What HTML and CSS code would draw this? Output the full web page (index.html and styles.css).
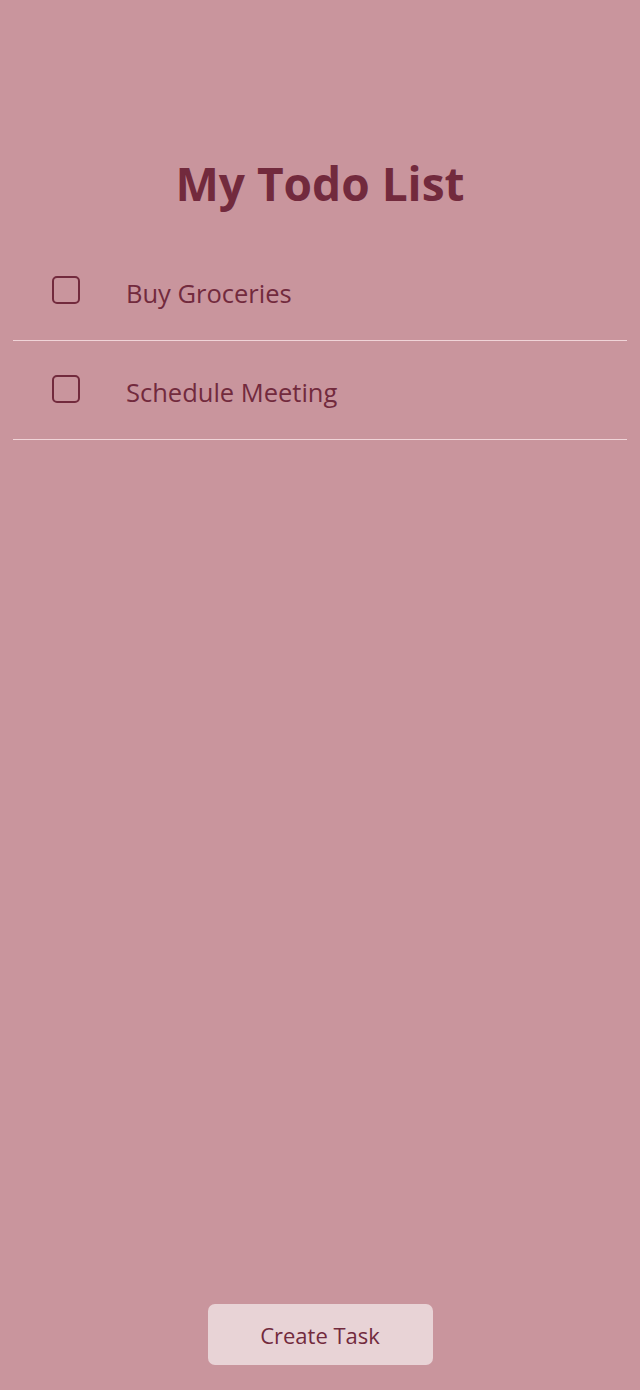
FILE: index.html
```html
<!DOCTYPE html>
<html>
<head>
<meta charset="utf-8">
<link rel="stylesheet" href="styles.css">
</head>
<body>
<div class="app">
  <h1 class="title">My Todo List</h1>
  <ul class="list">
    <li class="item"><span class="check"></span><span class="label">Buy Groceries</span></li>
    <li class="item"><span class="check"></span><span class="label">Schedule Meeting</span></li>
  </ul>
  <div class="footer"><button class="create">Create Task</button></div>
</div>
</body>
</html>
```
FILE: styles.css
```css
html, body {
  margin: 0;
  padding: 0;
  background: #c9959d;
}
body {
  font-family: "Open Sans", "Noto Sans", sans-serif;
  color: #722a3d;
}
.app {
  min-height: 1390px;
  display: flex;
  flex-direction: column;
  box-sizing: border-box;
  padding: 0 13px 25px;
}
.title {
  margin: 0 0 28px;
  padding-top: 152px;
  text-align: center;
  font-size: 46px;
  font-weight: 700;
  line-height: 62px;
}
.list {
  list-style: none;
  margin: 0;
  padding: 0;
  flex: 1;
}
.item {
  height: 99px;
  box-sizing: border-box;
  border-bottom: 1px solid #f0d4d8;
  display: flex;
  align-items: center;
  padding-left: 39px;
}
.check {
  width: 24px;
  height: 24px;
  border: 2px solid #722a3d;
  border-radius: 5px;
  flex: none;
  margin-top: -2px;
}
.label {
  margin-left: 46px;
  font-size: 25.5px;
  margin-top: 3px;
}
.footer {
  display: flex;
  justify-content: center;
}
.create {
  width: 225px;
  height: 61px;
  border: none;
  border-radius: 7px;
  background: #e8d3d6;
  color: #722a3d;
  font-family: "Open Sans", "Noto Sans", sans-serif;
  font-size: 22px;
  padding: 0;
  cursor: pointer;
}
```
